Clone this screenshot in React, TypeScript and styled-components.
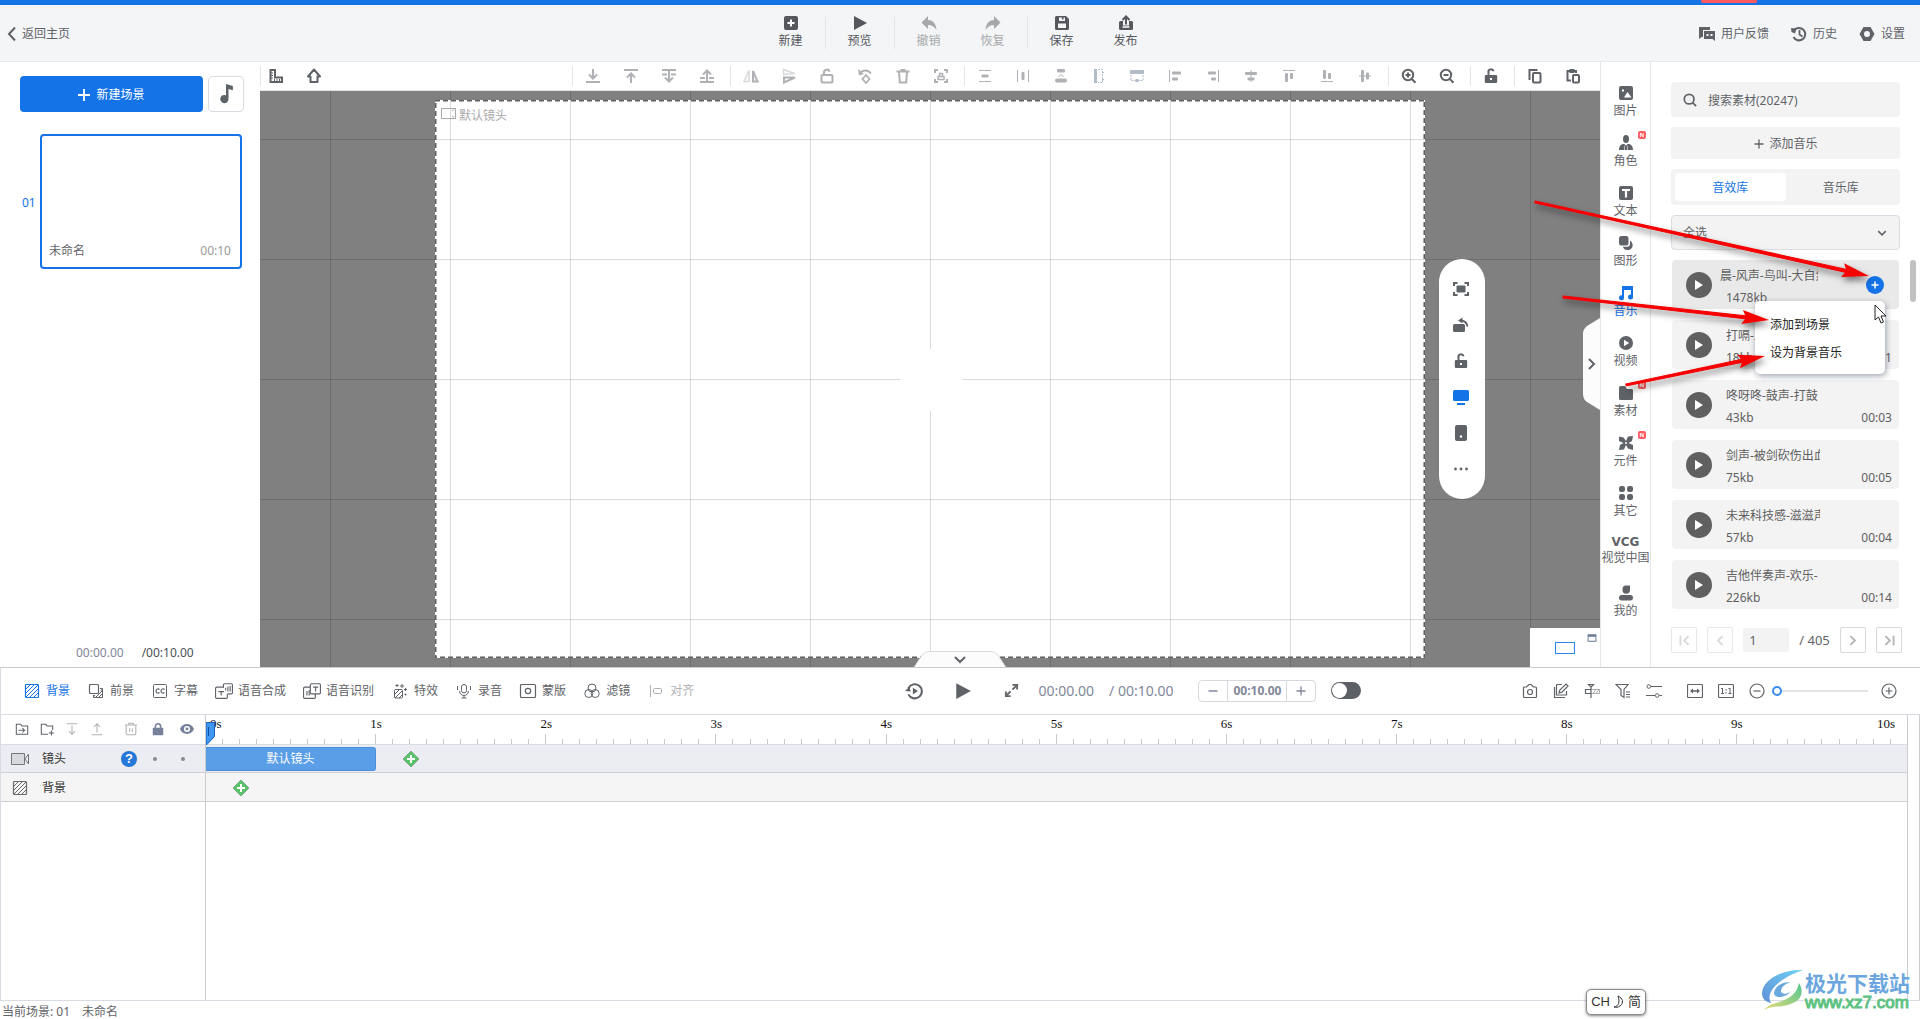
import React from 'react';
import styled, { createGlobalStyle, css } from 'styled-components';

const BLUE = '#1473e6';
const INK = '#5f6368';
const FAINT = '#b0b1b4';
const LINE = '#d9dce3';

const GlobalStyle = createGlobalStyle`
  *, *::before, *::after { box-sizing: border-box; }
  body {
    margin: 0;
    background: #fff;
    color: ${INK};
    font: 12px/20px "Noto Sans", "Noto Sans CJK SC", sans-serif;
  }
  button, input, select { font: inherit; color: inherit; margin: 0; padding: 0; }
  button { background: none; border: 0; cursor: pointer; }
  svg { display: block; flex: none; }
`;

/* ---------- icons ---------- */

const s = { fill: 'none', stroke: 'currentColor' } as const;

const ICONS: Record<string, React.ReactNode> = {
  back: <path {...s} strokeWidth="2" d="M11 1.500 5 8l6 6.500" />,
  create: <><rect x="1" y="1" width="14" height="14" rx="2" fill="currentColor" /><path d="M8 4.500v7M4.500 8h7" stroke="#fff" strokeWidth="2" /></>,
  play: <path fill="currentColor" d="M2 1l13 7L2 15z" />,
  undo: <path fill="currentColor" d="M7 1v4c5 0 8 3.500 8.500 10C13 11.500 11 10 7 10v4L.5 7.500z" />,
  redo: <path fill="currentColor" d="M9 1v4C4 5 1 8.500.5 15 3 11.500 5 10 9 10v4l6.500-6.500z" />,
  save: <path fill="currentColor" fillRule="evenodd" d="M2.500 1H12l3 3v9.500a1.500 1.500 0 0 1-1.500 1.500h-11A1.500 1.500 0 0 1 1 13.500v-11A1.500 1.500 0 0 1 2.500 1zM5 2.500V6h6V2.500H9.500v2H8v-2zM4 8.500V13h8V8.500z" />,
  publish: <><path fill="currentColor" d="M2.500 6H5v4.500h6V6h2.500A1.500 1.500 0 0 1 15 7.500v6a1.500 1.500 0 0 1-1.500 1.500h-11A1.500 1.500 0 0 1 1 13.500v-6A1.500 1.500 0 0 1 2.500 6z" /><path d="M4.500 12h7" stroke="#fff" strokeWidth="1.500" /><path {...s} strokeWidth="2" d="M8 9.500V2M4.500 5 8 1.500 11.500 5" /></>,
  feedback: <><path fill="currentColor" d="M0 1h11v3H4v7H2.500L0 13z" /><path fill="currentColor" fillRule="evenodd" d="M5 5h11v10l-2.500-2H5zm2.500 3v2h2V8zm4 0v2h2V8z" /></>,
  history: <><path {...s} strokeWidth="2" d="M3 4.500A6.200 6.200 0 1 1 2.500 11" /><path fill="currentColor" d="M0 2l5.500.5L4 7.500.5 6z" /><path {...s} strokeWidth="1.800" d="M8.500 4v4.500l3 2" /></>,
  gear: <path fill="currentColor" fillRule="evenodd" d="M4.500 1h7l4 7-4 7h-7l-4-7zM8 5a3 3 0 1 0 0 6 3 3 0 0 0 0-6z" />,
  plus: <path {...s} strokeWidth="1.800" d="M8 2v12M2 8h12" />,
  plusBold: <path {...s} strokeWidth="3" d="M8 1v14M1 8h14" />,
  note: <path fill="currentColor" d="M8 0l5.500 1.500V5L10 4v8a3.300 3.300 0 1 1-2-3z" />,
  ruler: <><path {...s} strokeWidth="2" d="M2.500 2h4.500v7.500h7V14H2.500z" /><path stroke="currentColor" d="M2 5h3M2 7.500h3M2 10h3M6.500 14v-3M9 14v-3M11.500 14v-3" /></>,
  home: <path {...s} strokeWidth="2" strokeLinejoin="round" d="M8 1.500 14 8.500h-2.500V14h-7V8.500H2z" />,
  down: <path {...s} strokeWidth="2" d="M8 1v9M4 6.500 8 10.500l4-4M1 14h14" />,
  up: <path {...s} strokeWidth="2" d="M8 15V6M4 9.500 8 5.500l4 4M1 2h14" />,
  downLayer: <path {...s} strokeWidth="2" d="M1 2h14M8 2v11M4 9.500l4 4 4-4M1 6.500h5M10 6.500h5" />,
  upLayer: <path {...s} strokeWidth="2" d="M1 14h14M8 14V3M4 6.500l4-4 4 4M1 10h5M10 10h5" />,
  flipH: <><path {...s} strokeWidth="1.500" opacity=".5" d="M6 2.500V13.500H1z" /><path {...s} strokeWidth="2" d="M10 3v10.500h4.500z" /></>,
  flipV: <><path {...s} strokeWidth="1.500" opacity=".5" d="M2.500 6.500V1.500l11 4z" /><path {...s} strokeWidth="2" d="M3 9.500v5l11-5z" /></>,
  unlock: <><rect {...s} x="2.500" y="7" width="11" height="7.500" rx="1" strokeWidth="2" /><path {...s} strokeWidth="2" d="M5 7V4.500a2.800 2.800 0 0 1 5.500-.8" /></>,
  rotate: <><path {...s} strokeWidth="2" d="M3 5C6 1.500 11 1.500 14 5.500" /><path fill="currentColor" d="M1 1l1 6.500 5-1.500z" /><path {...s} strokeWidth="1.800" d="M9 7l3.500 4L9 15l-3.500-4z" /></>,
  trash: <path {...s} strokeWidth="2" d="M1.500 3.500h13M5.500 2h5M4 4l.8 10.500h6.400L12 4" />,
  focus: <><path {...s} strokeWidth="2" d="M2 5V2h3M11 2h3v3M14 11v3h-3M5 14H2v-3" /><path {...s} strokeWidth="1.500" d="M5 11.500h6v-3H5zM6.500 8V5.500h3V8" /></>,
  distV: <><path {...s} d="M2 2.500h12M2 13.500h12" /><rect x="4.500" y="6.500" width="7" height="3" rx="1" fill="currentColor" /></>,
  distH: <><path {...s} d="M2.500 2v12M13.500 2v12" /><rect x="6.500" y="4" width="3" height="8" rx="1" fill="currentColor" /></>,
  spaceV: <><rect x="4" y="1" width="8" height="3.500" rx="1" fill="currentColor" /><rect x="2" y="10.500" width="12" height="4" rx="2" fill="currentColor" /><path {...s} d="M5.500 9 8 6.500 10.500 9" /></>,
  sameH: <><path fill="#b3bccb" d="M3 1h3v14H3z" /><path {...s} stroke="#b3bccb" strokeDasharray="2 1" d="M7 1.500h4.500v13H7M11.500 3v3M13 4.500h-3M13 11.500h-3" /></>,
  sameW: <><path fill="#b3bccb" d="M1 2h14v4H1z" /><path {...s} stroke="#b3bccb" strokeDasharray="2 1" d="M2 7v5.500h12V7" /><path fill="#b3bccb" d="M6.500 11h3v3h-3z" /></>,
  alignL: <><path {...s} d="M2.500 2v12" /><rect x="5" y="3.500" width="9" height="3" rx="1" fill="currentColor" /><rect x="5" y="9.500" width="6" height="3" rx="1" fill="currentColor" /></>,
  alignR: <><path {...s} d="M13.500 2v12" /><rect x="3" y="3.500" width="8" height="3" rx="1" fill="currentColor" /><rect x="6" y="9.500" width="5" height="3" rx="1" fill="currentColor" /></>,
  alignC: <><path {...s} d="M8 2v12" /><rect x="2" y="4" width="12" height="3" rx="1" fill="currentColor" /><rect x="4.500" y="9.500" width="7" height="3" rx="1" fill="currentColor" /></>,
  alignT: <><path {...s} d="M2 2.500h12" /><rect x="4" y="5" width="3" height="9" rx="1" fill="currentColor" /><rect x="9" y="5" width="3" height="6" rx="1" fill="currentColor" /></>,
  alignB: <><path {...s} d="M2 13.500h12" /><rect x="4" y="2" width="3" height="9" rx="1" fill="currentColor" /><rect x="9" y="5" width="3" height="6" rx="1" fill="currentColor" /></>,
  alignM: <><path {...s} d="M2 8h12" /><rect x="4" y="2" width="3" height="12" rx="1" fill="currentColor" /><rect x="9" y="4.500" width="3" height="7" rx="1" fill="currentColor" /></>,
  zoomIn: <><circle {...s} cx="7" cy="7" r="5.200" strokeWidth="2" /><path {...s} strokeWidth="2" d="M10.800 11l3.700 3.700M7 4.500v5M4.500 7h5" /></>,
  zoomOut: <><circle {...s} cx="7" cy="7" r="5.200" strokeWidth="2" /><path {...s} strokeWidth="2" d="M10.800 11l3.700 3.700M4.500 7h5" /></>,
  unlockSolid: <><path fill="currentColor" fillRule="evenodd" d="M3 7h10a1.200 1.200 0 0 1 1.200 1.200v5.600A1.200 1.200 0 0 1 13 15H3a1.200 1.200 0 0 1-1.200-1.200V8.200A1.200 1.200 0 0 1 3 7zm4 3v2h2v-2z" /><path {...s} strokeWidth="2" d="M5.500 7V4.500a2.500 2.500 0 0 1 5-1.200" /></>,
  copy: <><path {...s} strokeWidth="2" d="M2.500 12V2h8" /><rect {...s} x="6" y="5" width="7.500" height="9.500" rx="1" strokeWidth="2" /></>,
  paste: <><path {...s} strokeWidth="2" d="M6 12.500H2.500V3H11v2" /><path fill="currentColor" d="M4.500 1h5v4h-5z" /><rect {...s} x="8" y="7" width="6" height="7.500" rx="1" strokeWidth="2" /></>,
  picture: <><rect x="1" y="1" width="14" height="14" rx="2" fill="currentColor" /><path fill="#fff" d="M6 12.500l3.500-5.500 4 5.500zM4 4.500h2v2H4z" /></>,
  role: <><ellipse cx="8" cy="4" rx="3" ry="4" fill="currentColor" /><path fill="currentColor" fillRule="evenodd" d="M1 15c0-4 2-5.500 4-6h6c2 .5 4 2 4 6zM7 9l-1 6h4L9 9z" /><path fill="currentColor" d="M7.300 10h1.400l.8 5h-3z" /></>,
  text: <><rect x="1" y="1" width="14" height="14" rx="2" fill="currentColor" /><path d="M4 5h8M8 5v7.500" stroke="#fff" strokeWidth="2.200" /></>,
  shape: <><rect x="1" y="1" width="9.500" height="9.500" rx="2.500" fill="currentColor" /><path fill="currentColor" d="M12 5.500c4.500 3 3 9.500-2.500 9.500-2.500 0-4-1.300-4.700-3.300H9A3 3 0 0 0 12 8.700z" /></>,
  music: <><path fill="currentColor" d="M4 1h11v4H4z" /><path {...s} strokeWidth="2" d="M5 2v10.500M14 2v9.500" /><circle cx="3.500" cy="12.700" r="2.500" fill="currentColor" /><circle cx="12.500" cy="12" r="2.500" fill="currentColor" /></>,
  video: <><circle cx="8" cy="8" r="7" fill="currentColor" /><path fill="#fff" d="M6 4.800 11.200 8 6 11.200z" /></>,
  folder: <path fill="currentColor" d="M1 2.500A1.500 1.500 0 0 1 2.500 1H7l2 3h4.500A1.500 1.500 0 0 1 15 5.500v8a1.500 1.500 0 0 1-1.500 1.500h-11A1.500 1.500 0 0 1 1 13.500z" />,
  widget: <><path fill="currentColor" d="M1 1.500l4.500 1L8 6l2-4.500 5-.5-1 5-3.500 2L15 10v5l-5-1.500L8 10l-2 4.500-5 .5 1-5 3.500-2L1 6z" /><circle cx="8" cy="8" r="1" fill="#fff" /></>,
  other: <><rect x="1" y="1" width="6" height="6" rx="2.200" fill="currentColor" /><rect x="9" y="1" width="6" height="6" rx="2.200" fill="currentColor" /><rect x="1" y="9" width="6" height="6" rx="2.200" fill="currentColor" /><rect x="9" y="9" width="6" height="6" rx="2.200" fill="currentColor" /></>,
  mine: <><path fill="currentColor" d="M4.500 4A3.500 3.500 0 0 1 8 .5h4V5a3.700 3.700 0 0 1-7.500 0z" /><rect x="1" y="10" width="14" height="5.500" rx="2.700" fill="currentColor" /></>,
  search: <><circle {...s} cx="7" cy="7" r="5.500" strokeWidth="2" /><path {...s} strokeWidth="2" d="M11 11l4 4" /></>,
  chevDown: <path {...s} strokeWidth="2" d="M3 5.500l5 5 5-5" />,
  chevRight: <path {...s} strokeWidth="2.200" d="M5.500 2.500 11 8l-5.500 5.500" />,
  chevLeft: <path {...s} strokeWidth="2.200" d="M10.500 2.500 5 8l5.500 5.500" />,
  first: <path {...s} strokeWidth="2.200" d="M13 2.500 7.500 8l5.500 5.500M3 2v12" />,
  last: <path {...s} strokeWidth="2.200" d="M3 2.500 8.500 8 3 13.500M13 2v12" />,
  fitScreen: <><path {...s} strokeWidth="2" d="M1 5V2h3.500M11.500 2H15v3M15 11v3h-3.500M4.500 14H1v-3" /><rect x="3.500" y="4.500" width="9" height="7" rx="1" fill="currentColor" /></>,
  turn: <><rect x="0" y="7" width="12" height="8" rx="1.500" fill="currentColor" /><path {...s} strokeWidth="2" d="M7 3.500c4 0 7 2 7.500 6" /><path fill="currentColor" d="M9.500.5v6l-4.500-3z" /></>,
  monitor: <><rect x="0" y="1" width="16" height="11" rx="1.500" fill="currentColor" /><path fill="currentColor" d="M4 14h8v2H4z" /></>,
  tablet: <><rect x="2" y="0" width="12" height="16" rx="2" fill="currentColor" /><circle cx="8" cy="11.500" r="1.200" fill="#fff" /></>,
  dots: <><circle cx="2.500" cy="8" r="1.400" fill="currentColor" /><circle cx="8" cy="8" r="1.400" fill="currentColor" /><circle cx="13.500" cy="8" r="1.400" fill="currentColor" /></>,
  hatch: <><rect {...s} x="1.500" y="1.500" width="13" height="13" rx="1" strokeWidth="1.200" /><path {...s} d="M2 6l4-4M2 10l8-8M2 14 14 2M6 14l8-8M10 14l4-4" /></>,
  fore: <><rect {...s} x="1.500" y="1.500" width="9" height="9" rx="1" strokeWidth="1.200" /><path {...s} d="M12 5.500h2.500v9h-9V12M7.500 14.500l7-7M10.500 14.500l4-4M5.500 14l1.500-2M12.500 8l2-2" /></>,
  cc: <><rect {...s} x="1.500" y="1.500" width="13" height="13" rx="1" /><path {...s} strokeWidth="1.200" d="M7.500 6.500c-1-1-3.500-.8-3.500 1.500s2.500 2.500 3.500 1.500M12.500 6.500C11.500 5.500 9 5.700 9 8s2.500 2.500 3.500 1.500" /></>,
  tts: <><path {...s} d="M7.500 5V2.500a1 1 0 0 1 1-1h6a1 1 0 0 1 1 1v7a1 1 0 0 1-1 1h-3" /><path {...s} d="M7.500 4.500h-6a1 1 0 0 0-1 1v8a1 1 0 0 0 1 1h8.500a1 1 0 0 0 1-1v-3M3 8.500h5M5.500 8.500V12M9.500 5v2.500M11.500 4v4.500M13.500 3.500v5" /></>,
  stt: <><rect {...s} x="6.500" y="1.500" width="9" height="9" rx="1" /><path {...s} d="M6.500 4.500h-5a1 1 0 0 0-1 1v8a1 1 0 0 0 1 1H10a1 1 0 0 0 1-1v-3M3.500 8v4M5.500 7v5M9 4.500h4.500M11.200 4.500V8.500" /></>,
  effect: <><rect {...s} x="2.500" y="6.500" width="8" height="8.500" rx="1" /><path {...s} d="M3 11l4-4M3 15l7-7M7 15l3.500-3.500M5 1v3M3.500 2.500h3M10 1v4M8 3h4M13.500 5v3M12 6.500h3M13.500 10.500v2M12.500 11.500h2" /></>,
  mic: <><rect {...s} x="5.500" y="1.500" width="5" height="8.500" rx="2.500" /><path {...s} d="M3.500 8c.5 6 8.500 6 9 0M8 12.500V15M5.500 15h5M1.500 3v4M14.500 3v4" /></>,
  mask: <><rect {...s} x=".5" y="1.500" width="15" height="13" rx="1" strokeWidth="1.200" /><circle {...s} cx="8" cy="8" r="2.700" strokeWidth="1.200" /></>,
  filter3: <><circle {...s} cx="8" cy="5" r="4" /><circle {...s} cx="4.800" cy="10.500" r="4" /><circle {...s} cx="11.200" cy="10.500" r="4" /></>,
  alignT2: <><path {...s} d="M2.500 2v12" /><rect {...s} x="5.500" y="5.500" width="8" height="5" rx="1" /></>,
  replay: <><path {...s} strokeWidth="1.800" d="M3 5.500A6.300 6.300 0 1 1 3 11" /><path fill="currentColor" d="M0 8l5 .5L4 4zM7 5l4.500 3L7 11z" /></>,
  expand: <><path {...s} strokeWidth="2" d="M9 7l4-4M7 9l-4 4" /><path fill="currentColor" d="M9 1h6v6h-2V3H9zM7 15H1V9h2v4h4z" /></>,
  minus: <path {...s} strokeWidth="2" d="M2 8h12" />,
  camera: <><path {...s} strokeWidth="1.200" d="M2.500 4h2L7 1.500h2L11.500 4h2a1 1 0 0 1 1 1v8.500a1 1 0 0 1-1 1h-11a1 1 0 0 1-1-1V5a1 1 0 0 1 1-1z" /><circle {...s} cx="8" cy="9" r="2.500" strokeWidth="1.200" /></>,
  edit: <path {...s} strokeWidth="1.200" d="M1.500 4v10.500H12M9 1.500H4.500a1 1 0 0 0-1 1v9.500h10V8M6 10l.8-3L13 1 15 3 9 9.200z" />,
  keyframe: <><path {...s} strokeWidth="1.200" d="M7 15V4L4.500 1.500h5L7 4M7 6.500H1.500v4H7" /><path {...s} opacity=".5" d="M7 6.500h8.500v4H7M9 10.500l3-4M12 10.500l3-4" /></>,
  funnel: <path {...s} strokeWidth="1.200" d="M1 1.500h12L9 6.500v8l-3-2v-6zM11 9h4M11 11.500h4M11 14h4" />,
  sliders: <><circle {...s} cx="2.800" cy="3.500" r="1.800" /><circle {...s} cx="11.200" cy="12.500" r="1.800" /><path {...s} strokeWidth="1.200" d="M5 3.500h11M0 12.500h9M13.500 12.500H16" /></>,
  fitW: <><rect {...s} x=".5" y="1.500" width="15" height="13" rx="1" strokeWidth="1.200" /><path {...s} strokeWidth="1.500" d="M4 8h8" /><path fill="currentColor" d="M3 8l3-2.500v5zM13 8l-3-2.500v5z" /></>,
  ratio: <><rect {...s} x=".5" y="1.500" width="15" height="13" rx="1" strokeWidth="1.200" /><path {...s} d="M4.500 5v5.500M3 5.500h1.500M12 5v5.500M10.500 5.500H12M3 10.500h3M10.500 10.500h3M8 6v1.500M8 9v1.500" /></>,
  circleMinus: <><circle {...s} cx="8" cy="8" r="7" strokeWidth="1.200" /><path {...s} strokeWidth="1.200" d="M4.500 8h7" /></>,
  circlePlus: <><circle {...s} cx="8" cy="8" r="7" strokeWidth="1.200" /><path {...s} strokeWidth="1.200" d="M4.500 8h7M8 4.500v7" /></>,
  folderIn: <path {...s} strokeWidth="1.200" d="M1.500 14V2.500h5l1.500 2h6.500V14zM4 9.500h7M8.500 7l2.500 2.500L8.500 12" />,
  folderAdd: <path {...s} strokeWidth="1.200" d="M9 14H1.500V2.500h5l1.500 2h6.500V9M13 9.500v6M10 12.500h6" />,
  moveDown: <path {...s} strokeWidth="1.200" d="M2 2h12M8 4v10M4.500 10.500 8 14l3.500-3.500" />,
  moveUp: <path {...s} strokeWidth="1.200" d="M2 14.500h12M8 12V2M4.500 5.500 8 2l3.500 3.500" />,
  bin: <path {...s} strokeWidth="1.200" d="M1 3.500h14M5.500 3V1.500h5V3M2.500 4v9.500a1 1 0 0 0 1 1h9a1 1 0 0 0 1-1V4M6.500 7v4.500M9.500 7v4.500" />,
  lock: <><rect x="2" y="6.500" width="12" height="8.500" rx="1" fill="currentColor" /><path {...s} strokeWidth="1.800" d="M5 7V5a3 3 0 0 1 6 0v2" /></>,
  eye: <path fill="currentColor" fillRule="evenodd" d="M0 8c3-7.500 13-7.500 16 0-3 7.500-13 7.500-16 0zm8-3.500a3.500 3.500 0 1 0 0 7 3.500 3.500 0 0 0 0-7zM8 6.300a1.700 1.700 0 1 1 0 3.400 1.700 1.700 0 0 1 0-3.400z" />,
  window: <path fill="currentColor" fillRule="evenodd" d="M1 2h14v12H1zm1.500 4v6.500h11V6z" />,
};

const Icon = ({ name, size = 16 }: { name: string; size?: number }) => (
  <svg width={size} height={size} viewBox="0 0 16 16" aria-hidden="true">{ICONS[name]}</svg>
);

/* ---------- page frame ---------- */

const Page = styled.div`
  position: relative;
  display: flex;
  flex-direction: column;
  height: 100vh;
  min-height: 900px;
  overflow: hidden;
`;

const TitleStrip = styled.div`
  display: flex;
  justify-content: flex-end;
  flex: none;
  height: 5px;
  padding-right: 163px;
  background: ${BLUE};
`;

const TitleTag = styled.span`
  width: 56px;
  height: 3px;
  border-radius: 0 0 2px 2px;
  background: #ff5b60;
`;

const Header = styled.header`
  display: grid;
  grid-template-columns: 1fr auto 1fr;
  flex: none;
  height: 57px;
  padding-right: 4px;
  background: #f4f5f7;
  border-bottom: 1px solid #e7e8ea;
`;

const HeaderLink = styled.button`
  display: flex;
  align-items: center;
  gap: 6px;
  line-height: 22px;
  white-space: nowrap;
`;

const HeaderStart = styled.div`
  display: flex;
  align-items: center;
  padding: 1px 0 0 4px;
  ${HeaderLink} { gap: 2px; }
`;

const HeaderEnd = styled.div`
  display: flex;
  align-items: center;
  justify-content: flex-end;
  gap: 22px;
  padding: 1px 11px 0 0;
`;

const HeaderTools = styled.nav`
  display: flex;
  align-items: flex-start;
  padding-top: 10px;
`;

const HeaderTool = styled.button<{ $off?: boolean }>`
  display: flex;
  flex-direction: column;
  align-items: center;
  width: 64px;
  color: ${p => (p.$off ? '#a6a8ab' : '#54575c')};
`;

const HeaderRule = styled.span`
  width: 1px;
  height: 32px;
  margin: 2px 2px 0;
  background: #e3e4e8;
`;

const Workspace = styled.main`
  display: flex;
  flex: 1;
  min-height: 0;
`;

/* ---------- scenes ---------- */

const Scenes = styled.aside`
  display: flex;
  flex-direction: column;
  flex: none;
  width: 260px;
  padding: 14px 16px 4px 20px;
`;

const SceneActions = styled.div`
  display: flex;
  gap: 5px;
  height: 36px;
`;

const NewScene = styled.button`
  display: flex;
  flex: 1;
  align-items: center;
  justify-content: center;
  gap: 4px;
  padding: 2px 2px 0 0;
  border-radius: 4px;
  background: ${BLUE};
  color: #fff;
`;

const SceneMusic = styled.button`
  display: grid;
  place-items: center;
  width: 36px;
  border: 1px solid ${LINE};
  border-radius: 4px;
`;

const SceneRow = styled.div`
  display: flex;
  align-items: center;
  margin: 22px 2px 0 0;
`;

const SceneNumber = styled.span`
  width: 20px;
  padding: 2px 0 0 2px;
  color: ${BLUE};
`;

const SceneCard = styled.button`
  display: flex;
  flex: 1;
  align-items: flex-end;
  justify-content: space-between;
  height: 135px;
  padding: 6px 9px 6px 7px;
  border: 2px solid ${BLUE};
  border-radius: 4px;
  background: #fff;
  line-height: 20px;
  & > span:last-child { color: #999; }
`;

const SceneTime = styled.div`
  display: flex;
  gap: 18px;
  margin: auto 0 0 56px;
  color: #4c4f55;
  & > span:first-child { color: #7f8599; }
`;

/* ---------- canvas ---------- */

const Stage = styled.section`
  display: flex;
  flex: 1;
  flex-direction: column;
  min-width: 0;
`;

const StageBar = styled.div`
  display: flex;
  align-items: center;
  justify-content: space-between;
  flex: none;
  height: 29px;
  padding-right: 4px;
  border-bottom: 1px solid #e4e4e6;
`;

const ToolGroups = styled.div`
  display: flex;
`;

const ToolGroup = styled.div<{ $off?: boolean; $lead?: boolean }>`
  display: flex;
  gap: 8px;
  height: 20px;
  padding: 0 8px 0 ${p => (p.$lead ? 0 : 5)}px;
  border-left: 1px solid #e4e4e6;
  color: ${p => (p.$off ? FAINT : INK)};
`;

const ToolButton = styled.button`
  display: grid;
  place-items: center;
  width: 30px;
  height: 20px;
`;

const Board = styled.div`
  position: relative;
  flex: 1;
  overflow: hidden;
  background: #808080;
`;

const Frame = styled.div`
  position: absolute;
  top: 9px;
  right: 175px;
  bottom: 9px;
  left: 175px;
  background: #fff;
`;

const FrameOutline = styled.svg`
  position: absolute;
  top: 9px;
  left: 175px;
  width: calc(100% - 350px);
  height: calc(100% - 18px);
`;

const Grid = styled.div`
  position: absolute;
  inset: 0;
  background-image:
    linear-gradient(to right, rgba(0, 0, 0, 0.14) 1px, transparent 1px),
    linear-gradient(to bottom, rgba(0, 0, 0, 0.14) 1px, transparent 1px);
  background-size: 120px 120px;
  background-position: 70px 48px;
`;

const FrameName = styled.div`
  position: absolute;
  top: 15px;
  left: 181px;
  display: flex;
  align-items: flex-start;
  gap: 3px;
  color: #aaa;
  svg { margin-top: 2px; }
`;

const CentreMark = styled.svg`
  position: absolute;
  top: 258px;
  left: 640px;
`;

const FloatBar = styled.div`
  position: absolute;
  top: 168px;
  right: 115px;
  display: flex;
  flex-direction: column;
  align-items: center;
  width: 46px;
  padding: 12px 2px 12px 0;
  border-radius: 23px;
  background: #fff;
`;

const FloatButton = styled.button<{ $on?: boolean }>`
  display: grid;
  place-items: center;
  width: 36px;
  height: 36px;
  color: ${p => (p.$on ? BLUE : INK)};
`;

const SideTab = styled.button`
  position: absolute;
  top: 227px;
  right: 0;
  width: 17px;
  height: 92px;
`;

const FootTab = styled.button`
  position: absolute;
  bottom: 0;
  left: 654px;
  width: 92px;
  height: 16px;
`;

const MiniMap = styled.div`
  position: absolute;
  right: 0;
  bottom: 0;
  display: flex;
  align-items: flex-start;
  gap: 12px;
  width: 70px;
  height: 39px;
  padding: 5px 3px 0 25px;
  background: #fff;
  color: #66788f;
`;

const MiniView = styled.span`
  width: 20px;
  height: 12px;
  margin-top: 9px;
  border: 1px solid #2f86f0;
`;

/* ---------- categories ---------- */

const Categories = styled.nav`
  display: flex;
  flex: none;
  flex-direction: column;
  width: 50px;
  padding-top: 18px;
  border-left: 1px solid #e6e6e8;
`;

const Category = styled.button<{ $on?: boolean; $tight?: boolean }>`
  position: relative;
  display: flex;
  flex-direction: column;
  align-items: center;
  height: 50px;
  padding-top: ${p => (p.$tight ? 4 : 5)}px;
  line-height: ${p => (p.$tight ? 16 : 20)}px;
  white-space: nowrap;
  color: ${p => (p.$on ? BLUE : INK)};
`;

const Vcg = styled.b`
  font: bold 12px/16px "DejaVu Sans", sans-serif;
`;

const NewBadge = styled.span`
  position: absolute;
  top: 1px;
  right: 4px;
  width: 8px;
  height: 8px;
  border-radius: 2px;
  background: #ff5b60;
  color: #fff;
  font: bold 6px/8px "Liberation Sans", sans-serif;
  text-align: center;
`;

/* ---------- library ---------- */

const LibraryWrap = styled.aside`
  display: flex;
  flex: none;
  flex-direction: column;
  gap: 10px;
  width: 270px;
  padding: 20px 20px 0;
  border-left: 1px solid #e6e6e8;
  position: relative;
`;

const SearchBox = styled.label`
  display: flex;
  align-items: center;
  gap: 11px;
  height: 35px;
  padding: 0 12px;
  border-radius: 4px;
  background: #f3f3f3;
  input {
    flex: 1;
    min-width: 0;
    padding-top: 2px;
    border: 0;
    outline: 0;
    background: none;
  }
  input::placeholder { color: ${INK}; opacity: 1; }
`;

const AddMusic = styled.button`
  display: flex;
  align-items: center;
  justify-content: center;
  gap: 4px;
  height: 32px;
  padding-top: 2px;
  border-radius: 3px;
  background: #f3f3f3;
`;

const Tabs = styled.div`
  display: flex;
  height: 36px;
  padding: 4px;
  border-radius: 4px;
  background: #f3f3f3;
`;

const Tab = styled.button<{ $on?: boolean }>`
  flex: 1;
  padding-top: 2px;
  border-radius: 4px;
  background: ${p => (p.$on ? '#fff' : 'transparent')};
  color: ${p => (p.$on ? BLUE : INK)};
`;

const FilterBox = styled.label`
  display: flex;
  align-items: center;
  height: 35px;
  padding: 0 11px 0 11px;
  border: 1px solid ${LINE};
  border-radius: 4px;
  background: #f3f3f3;
  select {
    flex: 1;
    appearance: none;
    border: 0;
    outline: 0;
    background: none;
  }
`;

const TrackList = styled.ul`
  display: flex;
  flex-direction: column;
  gap: 11px;
  margin: 0 1px;
  padding: 0;
  list-style: none;
`;

const Track = styled.li<{ $on?: boolean }>`
  position: relative;
  display: flex;
  align-items: center;
  gap: 14px;
  height: 49px;
  padding: 0 7px 0 14px;
  border-radius: 4px;
  background: ${p => (p.$on ? '#e9e9e9' : '#f3f3f3')};
  line-height: 22px;
  color: #606060;
`;

const PlayDot = styled.button`
  display: grid;
  place-items: center;
  width: 26px;
  height: 26px;
  border-radius: 50%;
  background: #606060;
  color: #fff;
`;

const TrackText = styled.div`
  display: flex;
  flex: 1;
  flex-direction: column;
  min-width: 0;
  padding-top: 5px;
`;

const TrackTitle = styled.span<{ $scrolled?: boolean }>`
  width: 94px;
  overflow: hidden;
  white-space: nowrap;
  ${p => p.$scrolled && css`
    width: 98px;
    margin-left: -6px;
  `}
`;

const TrackMeta = styled.span`
  display: flex;
  justify-content: space-between;
`;

const AddDot = styled.button`
  display: grid;
  place-items: center;
  width: 18px;
  height: 18px;
  margin-right: 8px;
  border-radius: 50%;
  background: ${BLUE};
  color: #fff;
`;

const Menu = styled.div`
  position: absolute;
  z-index: 2;
  top: 41px;
  right: 14px;
  display: flex;
  flex-direction: column;
  width: 130px;
  padding: 10px 0 7px;
  border-radius: 5px;
  background: #fff;
  box-shadow: 1px 2px 6px rgba(40, 50, 80, 0.45);
`;

const MenuItem = styled.button`
  padding-left: 15px;
  line-height: 28px;
  text-align: left;
  color: #222;
`;

const Scrollbar = styled.span`
  position: absolute;
  top: 198px;
  right: 4px;
  width: 6px;
  height: 42px;
  border-radius: 3px;
  background: #c1c1c1;
`;

const Pager = styled.div`
  display: flex;
  align-items: center;
  justify-content: space-between;
  margin: 8px -2px 0 0;
  font-size: 13px;
  input {
    width: 46px;
    height: 24px;
    padding-left: 6px;
    border: 0;
    background: #f3f3f3;
  }
`;

const PageButton = styled.button<{ $off?: boolean }>`
  display: grid;
  place-items: center;
  width: 26px;
  height: 26px;
  border: 1px solid ${p => (p.$off ? '#e6e8ec' : '#d6d8de')};
  border-radius: 2px;
  color: ${p => (p.$off ? '#d8d9dc' : '#b2b3b6')};
`;

/* ---------- dock ---------- */

const Dock = styled.section`
  display: flex;
  flex: none;
  flex-direction: column;
  height: 352px;
  border-top: 1px solid #cbccd0;
`;

const DockBar = styled.div`
  display: grid;
  grid-template-columns: auto 4fr auto 3fr auto;
  align-items: center;
  height: 47px;
  padding: 0 16px 1px 22px;
  border-left: 1px solid ${LINE};
  border-bottom: 1px solid ${LINE};
`;

const DockTools = styled.div`
  display: flex;
  gap: 17px;
`;

const DockTool = styled.button<{ $on?: boolean; $off?: boolean }>`
  display: flex;
  align-items: center;
  gap: 5px;
  color: ${p => (p.$on ? BLUE : p.$off ? FAINT : INK)};
  svg { width: 18px; }
`;

const Transport = styled.div`
  display: flex;
  grid-column: 3;
  align-items: center;
`;

const TransportButtons = styled.div`
  display: flex;
  gap: 17px;
  margin-right: 11px;
  button { display: grid; place-items: center; width: 32px; height: 24px; }
`;

const Clock = styled.div`
  display: flex;
  gap: 15px;
  margin-right: 25px;
  font-size: 14px;
  color: #82879a;
`;

const Stepper = styled.div`
  display: flex;
  height: 22px;
  margin-right: 15px;
  border: 1px solid #d8d9de;
  border-radius: 4px;
  color: #82879a;
  button { display: grid; place-items: center; width: 28px; }
  input {
    width: 60px;
    border: 0;
    border-left: 1px solid #d8d9de;
    border-right: 1px solid #d8d9de;
    font-weight: 700;
    text-align: center;
    background: none;
  }
`;

const Switch = styled.input`
  display: block;
  width: 30px;
  height: 17px;
  padding: 1px;
  appearance: none;
  border-radius: 9px;
  background: #5c5f66;
  &::before {
    content: '';
    display: block;
    width: 15px;
    height: 15px;
    border-radius: 50%;
    background: #fff;
  }
`;

const ViewTools = styled.div`
  display: flex;
  grid-column: 5;
  align-items: center;
`;

const ViewGroup = styled.div`
  display: flex;
  margin-right: 10px;
`;

const ViewButton = styled.button`
  display: grid;
  place-items: center;
  width: 31px;
  height: 24px;
`;

const ZoomRange = styled.input`
  width: 96px;
  height: 12px;
  margin: 0 5px 0 0;
  appearance: none;
  background: linear-gradient(#e4e4e8, #e4e4e8) center / 100% 2px no-repeat;
  &::-webkit-slider-thumb {
    appearance: none;
    width: 10px;
    height: 10px;
    border: 2px solid #3b8cf2;
    border-radius: 50%;
    background: #fff;
  }
`;

const Timeline = styled.div`
  display: flex;
  flex: 1;
  min-height: 0;
  border-bottom: 1px solid ${LINE};
`;

const LayerColumn = styled.div`
  flex: none;
  width: 206px;
  border-left: 1px solid ${LINE};
  border-right: 1px solid #cbccd0;
`;

const LayerBar = styled.div`
  display: flex;
  align-items: center;
  height: 30px;
  padding: 0 0 1px 12px;
  border-bottom: 1px solid ${LINE};
`;

const LayerButton = styled.button<{ $off?: boolean; $slate?: boolean; $gap?: number }>`
  display: grid;
  place-items: center;
  width: 18px;
  height: 20px;
  margin-right: ${p => p.$gap ?? 7}px;
  color: ${p => (p.$off ? FAINT : p.$slate ? '#76809b' : INK)};
`;

const Row = styled.div<{ $tone: string; $tall?: boolean }>`
  display: flex;
  align-items: center;
  height: ${p => (p.$tall ? 29 : 28)}px;
  padding-top: ${p => (p.$tall ? 1 : 0)}px;
  border-bottom: 1px solid #cfd0d5;
  background: ${p => p.$tone};
  color: #333;
`;

const LayerName = styled.span`
  display: grid;
  grid-template-columns: 20px 1fr;
  flex: 1;
  align-items: center;
  gap: 12px;
  padding-left: 9px;
  color: #333;
  svg { color: #6b6b6b; justify-self: center; }
`;

const Help = styled.button`
  width: 16px;
  height: 16px;
  margin-right: 12px;
  border-radius: 50%;
  background: #2577d8;
  color: #fff;
  font: bold 13px/16px "Liberation Sans", sans-serif;
`;

const Dot = styled.i`
  width: 4px;
  height: 4px;
  margin: 0 20px 0 4px;
  border-radius: 50%;
  background: #888;
`;

const TrackArea = styled.div`
  position: relative;
  flex: 1;
  min-width: 0;
  border-right: 1px solid #cbccd0;
`;

const Ruler = styled.div`
  height: 30px;
  border-bottom: 1px solid ${LINE};
`;

const RulerLabels = styled.div`
  display: grid;
  grid-template-columns: 1fr repeat(9, 2fr) 1fr;
  height: 19px;
  color: #111;
  font: 13px/17px "Liberation Serif", serif;
  text-align: center;
  span:first-child { padding-left: 4px; text-align: left; }
  span:last-child { padding-right: 12px; text-align: right; }
`;

const Ticks = styled.div`
  display: flex;
  align-items: flex-end;
  height: 10px;
`;

const Tick = styled.i<{ $major: boolean }>`
  flex: 1;
  height: ${p => (p.$major ? 10 : 5)}px;
  border-right: 1px solid #c9c9cc;
`;

const PlayHead = styled.svg`
  position: absolute;
  top: 7px;
  left: 0;
`;

const Clip = styled.button`
  width: 10%;
  height: 24px;
  border: 1px solid #4a90dd;
  border-left: 0;
  border-radius: 0 3px 3px 0;
  background: #5a9ee8;
  color: #fff;
`;

const AddKey = styled.button`
  margin-left: 26px;
`;

const Gutter = styled.div`
  flex: none;
  width: 12px;
  border-right: 1px solid #cbccd0;
`;

const Status = styled.footer`
  display: flex;
  gap: 12px;
  height: 18px;
  padding-left: 2px;
  line-height: 22px;
`;

/* ---------- overlays ---------- */

const Arrows = styled.svg`
  position: absolute;
  z-index: 3;
  top: 180px;
  right: 0;
  pointer-events: none;
  filter: drop-shadow(2px 4px 3px rgba(0, 0, 0, 0.5));
`;

const Pointer = styled.svg`
  position: absolute;
  z-index: 4;
  top: 304px;
  right: 32px;
`;

const Ime = styled.div`
  position: absolute;
  right: 274px;
  bottom: 4px;
  display: flex;
  align-items: center;
  gap: 3px;
  height: 26px;
  padding: 0 4px;
  border: 1px solid #8a8a8a;
  border-radius: 5px;
  background: #fff;
  box-shadow: 0 1px 3px rgba(0, 0, 0, 0.5);
  color: #333;
  font: 13px/24px "Liberation Sans", "Noto Sans CJK SC", sans-serif;
`;

const Watermark = styled.div`
  position: absolute;
  right: 10px;
  bottom: 8px;
  display: flex;
  align-items: center;
  gap: 1px;
`;

const WatermarkText = styled.div`
  display: flex;
  flex-direction: column;
  color: #5dc283;
  font: 17px/17px "Liberation Sans", sans-serif;
  -webkit-text-stroke: 1px #5dc283;
  strong {
    color: #6ba6de;
    font: bold 21px/24px "Noto Sans CJK SC", sans-serif;
    -webkit-text-stroke: 0;
  }
`;

/* ---------- data ---------- */

const HEADER_TOOLS = [
  [{ icon: 'create', label: '新建' }],
  [{ icon: 'play', label: '预览' }],
  [{ icon: 'undo', label: '撤销', off: true }, { icon: 'redo', label: '恢复', off: true }],
  [{ icon: 'save', label: '保存' }, { icon: 'publish', label: '发布' }],
] as { icon: string; label: string; off?: boolean }[][];

const STAGE_TOOLS = [
  { off: true, icons: ['down', 'up', 'downLayer', 'upLayer'] },
  { off: true, icons: ['flipH', 'flipV', 'unlock', 'rotate', 'trash', 'focus'] },
  { off: true, icons: ['distV', 'distH', 'spaceV', 'sameH', 'sameW', 'alignL', 'alignR', 'alignC', 'alignT', 'alignB', 'alignM'] },
  { off: false, icons: ['zoomIn', 'zoomOut'] },
  { off: false, icons: ['unlockSolid'] },
  { off: false, icons: ['copy', 'paste'] },
];

const CATEGORIES = [
  { icon: 'picture', label: '图片' },
  { icon: 'role', label: '角色', fresh: true },
  { icon: 'text', label: '文本' },
  { icon: 'shape', label: '图形' },
  { icon: 'music', label: '音乐', on: true },
  { icon: 'video', label: '视频' },
  { icon: 'folder', label: '素材', fresh: true },
  { icon: 'widget', label: '元件', fresh: true },
  { icon: 'other', label: '其它' },
  { icon: '', label: '视觉中国' },
  { icon: 'mine', label: '我的' },
] as { icon: string; label: string; on?: boolean; fresh?: boolean }[];

const TRACKS = [
  { title: '晨-风声-鸟叫-大自然', size: '1478kb', time: '' },
  { title: '打嗝-人声', size: '18kb', time: '00:01' },
  { title: '咚呀咚-鼓声-打鼓', size: '43kb', time: '00:03' },
  { title: '剑声-被剑砍伤出血', size: '75kb', time: '00:05' },
  { title: '未来科技感-滋滋声', size: '57kb', time: '00:04' },
  { title: '吉他伴奏声-欢乐-', size: '226kb', time: '00:14' },
];

const DOCK_TOOLS = [
  { icon: 'hatch', label: '背景', on: true },
  { icon: 'fore', label: '前景' },
  { icon: 'cc', label: '字幕' },
  { icon: 'tts', label: '语音合成', size: 18 },
  { icon: 'stt', label: '语音识别', size: 18 },
  { icon: 'effect', label: '特效' },
  { icon: 'mic', label: '录音' },
  { icon: 'mask', label: '蒙版' },
  { icon: 'filter3', label: '滤镜' },
  { icon: 'alignT2', label: '对齐', off: true },
] as { icon: string; label: string; on?: boolean; off?: boolean; size?: number }[];

const LAYER_BUTTONS = [
  { icon: 'folderIn' }, { icon: 'folderAdd' }, { icon: 'moveDown', off: true }, { icon: 'moveUp', off: true, gap: 16 },
  { icon: 'bin', off: true, gap: 9 }, { icon: 'lock', slate: true, gap: 11 }, { icon: 'eye', slate: true },
] as { icon: string; off?: boolean; slate?: boolean; gap?: number }[];

const Diamond = () => (
  <AddKey aria-label="添加">
    <svg width="18" height="18" viewBox="0 0 18 18">
      <path d="M9 1l8 8-8 8-8-8z" fill="#57c46a" stroke="#7fa58a" />
      <path d="M9 5v8M5 9h8" stroke="#fff" strokeWidth="2" />
    </svg>
  </AddKey>
);

const Arrow = ({ from, to }: { from: [number, number]; to: [number, number] }) => {
  const angle = (Math.atan2(to[1] - from[1], to[0] - from[0]) * 180) / Math.PI;
  const length = Math.hypot(to[0] - from[0], to[1] - from[1]);
  return (
    <g transform={`translate(${from[0]} ${from[1]}) rotate(${angle})`}>
      <path d={`M0-1L${length - 20}-1.500v3L0 1z`} fill="#f60000" stroke="#f60000" />
      <path d={`M${length} 0l-27-7 4 7-4 7z`} fill="#f60000" />
    </g>
  );
};

/* ---------- sections ---------- */

const TopBar = () => (
  <Header>
    <HeaderStart><HeaderLink><Icon name="back" />返回主页</HeaderLink></HeaderStart>
    <HeaderTools>
      {HEADER_TOOLS.map((group, i) => (
        <React.Fragment key={i}>
          {i > 0 && <HeaderRule />}
          {group.map(t => (
            <HeaderTool key={t.label} $off={t.off}><Icon name={t.icon} />{t.label}</HeaderTool>
          ))}
        </React.Fragment>
      ))}
    </HeaderTools>
    <HeaderEnd>
      <HeaderLink><Icon name="feedback" />用户反馈</HeaderLink>
      <HeaderLink><Icon name="history" />历史</HeaderLink>
      <HeaderLink><Icon name="gear" />设置</HeaderLink>
    </HeaderEnd>
  </Header>
);

const ScenePanel = () => (
  <Scenes>
    <SceneActions>
      <NewScene><Icon name="plus" />新建场景</NewScene>
      <SceneMusic aria-label="音乐"><Icon name="note" size={20} /></SceneMusic>
    </SceneActions>
    <SceneRow>
      <SceneNumber>01</SceneNumber>
      <SceneCard><span>未命名</span><span>00:10</span></SceneCard>
    </SceneRow>
    <SceneTime><span>00:00.00</span><span>/00:10.00</span></SceneTime>
  </Scenes>
);

const CanvasArea = () => (
  <Stage>
    <StageBar>
      <ToolGroup $lead>
        <ToolButton aria-label="标尺"><Icon name="ruler" /></ToolButton>
        <ToolButton aria-label="主页"><Icon name="home" /></ToolButton>
      </ToolGroup>
      <ToolGroups>
        {STAGE_TOOLS.map((g, i) => (
          <ToolGroup key={i} $off={g.off}>
            {g.icons.map(n => <ToolButton key={n} aria-label={n}><Icon name={n} /></ToolButton>)}
          </ToolGroup>
        ))}
      </ToolGroups>
    </StageBar>
    <Board>
      <Frame />
      <Grid />
      <FrameOutline>
        <rect x="0" y="0" width="100%" height="100%" fill="none" stroke="#606060" strokeWidth="3" strokeDasharray="5 3" />
      </FrameOutline>
      <CentreMark width="62" height="62"><path d="M31 0v62M0 31h62" stroke="#fff" strokeWidth="5" /></CentreMark>
      <FrameName>
        <svg width="15" height="12" viewBox="0 0 15 12">
          <rect x=".5" y=".5" width="14" height="10" fill="none" stroke="#aaa" />
          <path d="M11 3l2-1.500M11 8l2 1.500" stroke="#aaa" />
        </svg>
        默认镜头
      </FrameName>
      <FloatBar>
        {['fitScreen', 'turn', 'unlockSolid', 'monitor', 'tablet', 'dots'].map(n => (
          <FloatButton key={n} $on={n === 'monitor'} aria-label={n}><Icon name={n} /></FloatButton>
        ))}
      </FloatBar>
      <SideTab aria-label="收起">
        <svg width="17" height="92" viewBox="0 0 17 92">
          <path d="M17 0v92L4 84q-4-3-4-8V16q0-5 4-8z" fill="#fcfcfc" />
          <path d="M6 41l5 5-5 5" fill="none" stroke={INK} strokeWidth="2" />
        </svg>
      </SideTab>
      <FootTab aria-label="收起">
        <svg width="92" height="16" viewBox="0 0 92 16">
          <path d="M0 16.500 8 4q3-3.500 8-3.500h60q5 0 8 3.500l8 12.500z" fill="#fcfcfc" stroke="#d9d9db" />
          <path d="M41 6l5 5 5-5" fill="none" stroke={INK} strokeWidth="2" />
        </svg>
      </FootTab>
      <MiniMap><MiniView /><Icon name="window" size={10} /></MiniMap>
    </Board>
  </Stage>
);

const CategoryBar = () => (
  <Categories>
    {CATEGORIES.map(c => (
      <Category key={c.label} $on={c.on} $tight={!c.icon}>
        {c.icon ? <Icon name={c.icon} /> : <Vcg>VCG</Vcg>}
        {c.label}
        {c.fresh && <NewBadge>N</NewBadge>}
      </Category>
    ))}
  </Categories>
);

const Library = () => (
  <LibraryWrap>
    <SearchBox><Icon name="search" size={14} /><input aria-label="搜索素材" placeholder="搜索素材(20247)" /></SearchBox>
    <AddMusic><Icon name="plus" size={12} />添加音乐</AddMusic>
    <Tabs><Tab $on>音效库</Tab><Tab>音乐库</Tab></Tabs>
    <FilterBox><select aria-label="分类"><option>全选</option></select><Icon name="chevDown" size={12} /></FilterBox>
    <TrackList>
      {TRACKS.map((t, i) => (
        <Track key={t.title} $on={i === 0}>
          <PlayDot aria-label="播放">
            <svg width="8" height="10" viewBox="0 0 8 10"><path d="M0 0l8 5-8 5z" fill="#fff" /></svg>
          </PlayDot>
          <TrackText>
            <TrackTitle $scrolled={i === 0}>{t.title}</TrackTitle>
            <TrackMeta><span>{t.size}</span><span>{t.time}</span></TrackMeta>
          </TrackText>
          {i === 0 && (
            <>
              <AddDot aria-label="添加"><Icon name="plusBold" size={8} /></AddDot>
              <Menu>
                <MenuItem>添加到场景</MenuItem>
                <MenuItem>设为背景音乐</MenuItem>
              </Menu>
            </>
          )}
        </Track>
      ))}
    </TrackList>
    <Scrollbar />
    <Pager>
      <PageButton $off aria-label="首页"><Icon name="first" size={13} /></PageButton>
      <PageButton $off aria-label="上一页"><Icon name="chevLeft" size={13} /></PageButton>
      <input aria-label="页码" defaultValue="1" />
      <span>/ 405</span>
      <PageButton aria-label="下一页"><Icon name="chevRight" size={13} /></PageButton>
      <PageButton aria-label="末页"><Icon name="last" size={13} /></PageButton>
    </Pager>
  </LibraryWrap>
);

const BottomDock = () => (
  <Dock>
    <DockBar>
      <DockTools>
        {DOCK_TOOLS.map(t => (
          <DockTool key={t.label} $on={t.on} $off={t.off}><Icon name={t.icon} size={t.size} />{t.label}</DockTool>
        ))}
      </DockTools>
      <Transport>
        <TransportButtons>
          <button aria-label="重播"><Icon name="replay" size={18} /></button>
          <button aria-label="播放"><Icon name="play" size={18} /></button>
          <button aria-label="全屏"><Icon name="expand" size={15} /></button>
        </TransportButtons>
        <Clock><span>00:00.00</span><span>/ 00:10.00</span></Clock>
        <Stepper>
          <button aria-label="减少"><Icon name="minus" size={12} /></button>
          <input aria-label="时长" defaultValue="00:10.00" />
          <button aria-label="增加"><Icon name="plus" size={12} /></button>
        </Stepper>
        <Switch type="checkbox" aria-label="模式" />
      </Transport>
      <ViewTools>
        <ViewGroup>
          {['camera', 'edit', 'keyframe', 'funnel', 'sliders'].map(n => (
            <ViewButton key={n} aria-label={n}><Icon name={n} /></ViewButton>
          ))}
        </ViewGroup>
        {['fitW', 'ratio', 'circleMinus'].map(n => (
          <ViewButton key={n} aria-label={n}><Icon name={n} /></ViewButton>
        ))}
        <ZoomRange type="range" aria-label="缩放" defaultValue={0} />
        <ViewButton aria-label="放大"><Icon name="circlePlus" /></ViewButton>
      </ViewTools>
    </DockBar>
    <Timeline>
      <LayerColumn>
        <LayerBar>
          {LAYER_BUTTONS.map(b => (
            <LayerButton key={b.icon} $off={b.off} $slate={b.slate} $gap={b.gap} aria-label={b.icon}>
              <Icon name={b.icon} size={14} />
            </LayerButton>
          ))}
        </LayerBar>
        <Row $tone="#ecedf2">
          <LayerName>
            <svg width="20" height="14" viewBox="0 0 20 14">
              <path d="M1.500 1.500h13v11h-13z" fill="#d8d9dc" stroke="#777" />
              <path d="M15 7l3.500-5v10z" fill="none" stroke="#777" />
            </svg>
            镜头
          </LayerName>
          <Help>?</Help>
          <Dot /><Dot />
        </Row>
        <Row $tone="#f5f5f5" $tall>
          <LayerName><Icon name="hatch" />背景</LayerName>
        </Row>
      </LayerColumn>
      <TrackArea>
        <Ruler>
          <RulerLabels>
            {Array.from({ length: 11 }, (_, i) => <span key={i}>{i}s</span>)}
          </RulerLabels>
          <Ticks>
            {Array.from({ length: 100 }, (_, i) => <Tick key={i} $major={i % 10 === 9} />)}
          </Ticks>
        </Ruler>
        <PlayHead width="9" height="23" viewBox="0 0 9 23">
          <path d="M0 .5h8.500v14L1 22.500H0z" fill="#3f97f2" stroke="#1a63b8" />
          <path d="M2.500 5v9" stroke="#0f4f9e" />
        </PlayHead>
        <Row $tone="#ecedf2"><Clip>默认镜头</Clip><Diamond /></Row>
        <Row $tone="#f5f5f5" $tall><Diamond /></Row>
      </TrackArea>
      <Gutter />
    </Timeline>
    <Status><span>当前场景: 01</span><span>未命名</span></Status>
  </Dock>
);

export default function App() {
  return (
    <>
      <GlobalStyle />
      <Page>
        <TitleStrip><TitleTag /></TitleStrip>
        <TopBar />
        <Workspace>
          <ScenePanel />
          <CanvasArea />
          <CategoryBar />
          <Library />
        </Workspace>
        <BottomDock />
        <Arrows width="400" height="220" viewBox="1520 180 400 220">
          <Arrow from={[1535, 202]} to={[1869, 276]} />
          <Arrow from={[1563, 297]} to={[1769, 320]} />
          <Arrow from={[1626, 385]} to={[1765, 356]} />
        </Arrows>
        <Pointer width="14" height="21" viewBox="0 0 14 21">
          <path d="M1 1v15l3.500-3 2.500 6 2.500-1-2.500-6H12z" fill="#fff" stroke="#222" />
        </Pointer>
        <Ime>
          <span>CH</span>
          <svg width="12" height="14" viewBox="0 0 12 14"><path d="M5 1c5 2 6 7 2 10-2 1.500-4 1.500-6 1 5-1 6-5 4-11z" fill="none" stroke="#333" /></svg>
          <span>简</span>
        </Ime>
        <Watermark>
          <svg width="43" height="42" viewBox="0 0 43 42">
            <defs>
              <linearGradient id="wave" x1="0" y1="1" x2="1" y2="0">
                <stop offset="0" stopColor="#5f8fd6" />
                <stop offset="1" stopColor="#6fd2f5" />
              </linearGradient>
              <linearGradient id="leaf" x1="0" y1="1" x2="1" y2="0">
                <stop offset="0" stopColor="#e8dc7a" />
                <stop offset="1" stopColor="#4fc48e" />
              </linearGradient>
            </defs>
            <path d="M42 1C22 0 2 10 1 24c0 6 4 9 9 10C4 24 16 10 42 1z" fill="url(#wave)" />
            <path d="M13 24c1-7 8-11 16-11-7 3-9 6-9 10 3 3 7 2 9-1-1 6-16 9-16 2z" fill="#6aa9e0" />
            <path d="M38 14c5 8 3 16-6 20-9 5-20 2-29 7 4-5 9-6 15-8 10-3 18-8 20-19z" fill="url(#leaf)" />
          </svg>
          <WatermarkText><strong>极光下载站</strong>www.xz7.com</WatermarkText>
        </Watermark>
      </Page>
    </>
  );
}
